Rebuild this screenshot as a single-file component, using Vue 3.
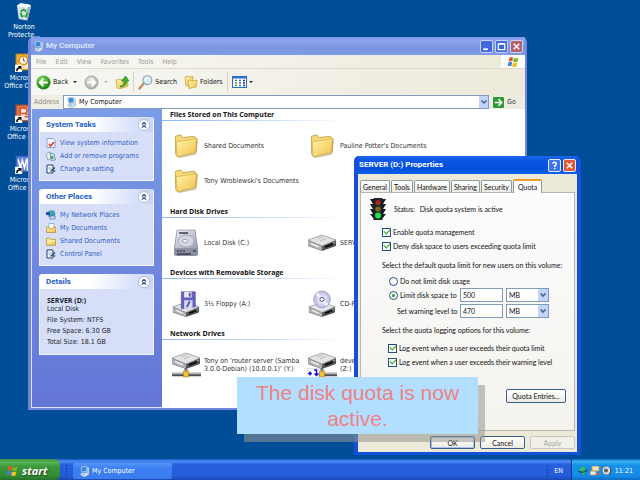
<script setup>
import { ref } from 'vue'

const desktopIcons = [
  { icon: 'bin', lines: ['Norton', 'Protecte...'] },
  { icon: 'outlook', lines: ['Microsoft', 'Office Outl...'] },
  { icon: 'powerpoint', lines: ['Microsoft', 'Office Po...'] },
  { icon: 'word', lines: ['Microsoft', 'Office W...'] },
]

const menus = ['File', 'Edit', 'View', 'Favorites', 'Tools', 'Help']

const panels = [
  {
    title: 'System Tasks',
    links: [
      { icon: 'info', text: 'View system information' },
      { icon: 'programs', text: 'Add or remove programs' },
      { icon: 'setting', text: 'Change a setting' },
    ],
  },
  {
    title: 'Other Places',
    links: [
      { icon: 'network', text: 'My Network Places' },
      { icon: 'docs', text: 'My Documents' },
      { icon: 'shared', text: 'Shared Documents' },
      { icon: 'setting', text: 'Control Panel' },
    ],
  },
]

const sections = [
  {
    title: 'Files Stored on This Computer',
    items: [
      { icon: 'folder', lines: ['Shared Documents'] },
      { icon: 'folder', lines: ["Pauline Potter's Documents"] },
      { icon: 'folder', lines: ["Tony Wroblewski's Documents"] },
    ],
  },
  {
    title: 'Hard Disk Drives',
    items: [
      { icon: 'hdd', lines: ['Local Disk (C:)'] },
      { icon: 'drive', lines: ['SERVER (D:)'] },
    ],
  },
  {
    title: 'Devices with Removable Storage',
    items: [
      { icon: 'floppy', lines: ['3½ Floppy (A:)'] },
      { icon: 'cd', lines: ['CD-ROM (E:)'] },
    ],
  },
  {
    title: 'Network Drives',
    items: [
      { icon: 'netdrive', lines: ["Tony on 'router server (Samba", "3.0.0-Debian) (10.0.0.1)' (Y:)"] },
      { icon: 'netsync', lines: ['devel', '(Z:)'] },
    ],
  },
]

const tabs = ['General', 'Tools', 'Hardware', 'Sharing', 'Security', 'Quota']
const address = ref('My Computer')
const enabled = ref(true)
const deny = ref(true)
const limitMode = ref('limit')
const limit = ref('500')
const warning = ref('470')
const logLimit = ref(true)
const logWarning = ref(true)
</script>

<template>
  <svg class="defs" aria-hidden="true">
    <defs>
      <linearGradient id="gFolder" x1="0" y1="0" x2="1" y2="1">
        <stop offset="0" stop-color="#fff3a8" /><stop offset="1" stop-color="#f0c24c" />
      </linearGradient>
      <linearGradient id="gMetal" x1="0" y1="0" x2="1" y2="1">
        <stop offset="0" stop-color="#eef0f6" /><stop offset="1" stop-color="#9a9eb0" />
      </linearGradient>
      <radialGradient id="gGreen" cx=".4" cy=".3" r=".8">
        <stop offset="0" stop-color="#8ee06c" /><stop offset=".6" stop-color="#2f9c24" /><stop offset="1" stop-color="#1c7416" />
      </radialGradient>
      <radialGradient id="gGrey" cx=".4" cy=".3" r=".8">
        <stop offset="0" stop-color="#e4e4e0" /><stop offset="1" stop-color="#a4a49e" />
      </radialGradient>
      <radialGradient id="gDisc">
        <stop offset="0" stop-color="#fff" /><stop offset=".5" stop-color="#dcdcf6" /><stop offset="1" stop-color="#b4b6dc" />
      </radialGradient>
    </defs>
    <symbol id="bin" viewBox="0 0 20 20">
      <path d="M2 4l2 14 9 1.500L17 4l-3-2H5z" fill="#d7e3ec" />
      <path d="M2 4l4-3 6 1 5 2-4 2-6-1z" fill="#f8fbfd" />
      <path d="M13 6l4-2-3.500 14.500L12 19z" fill="#9eb4c6" />
      <path d="M6 10l3-2 3 2M6 11l1 4h2M13 11l-1 4h-2" fill="none" stroke="#2aa63a" stroke-width="2" />
    </symbol>
    <symbol id="shortcut" viewBox="0 0 7 7">
      <path d="M0 0h7v7H0z" fill="#fff" /><path d="M1.200 6.200c-.4-2 .6-3.400 2.400-3.600L2.500 1.200h3.700v3.700L4.900 3.800C3.500 4 2.400 4.700 2.600 6.200z" fill="#111" />
    </symbol>
    <symbol id="outlook" viewBox="0 0 18 18">
      <rect x="1" y="1" width="16" height="15" fill="#f0b23e" stroke="#c98416" /><rect x="4" y="4" width="12" height="11" fill="#fbe7b0" />
      <circle cx="8" cy="7" r="4" fill="#fff" stroke="#d9901c" stroke-width="1.500" /><path d="M8 4.500V7l2 1" stroke="#a66209" fill="none" />
      <use href="#shortcut" x="0" y="11" width="7" height="7" />
    </symbol>
    <symbol id="powerpoint" viewBox="0 0 18 18">
      <rect x="1" y="1" width="16" height="15" fill="#e0704a" stroke="#b04a28" /><rect x="5" y="4" width="11" height="11" fill="#fbe4da" />
      <path d="M5 12V4h4a2.500 2.500 0 0 1 0 5H6M9 12h6M10 10h5" stroke="#d2552c" stroke-width="1.500" fill="none" />
      <use href="#shortcut" x="0" y="11" width="7" height="7" />
    </symbol>
    <symbol id="word" viewBox="0 0 18 18">
      <rect x="1" y="1" width="16" height="15" fill="#5c84d8" stroke="#2d54a8" /><rect x="11" y="3" width="6" height="12" fill="#e8effc" />
      <path d="M3 4l2 8 2-7 2 7 2-8M12 6h4M12 9h4M12 12h4" stroke="#fff" stroke-width="1.500" fill="none" />
      <use href="#shortcut" x="0" y="11" width="7" height="7" />
    </symbol>
    <symbol id="computer" viewBox="0 0 12 12">
      <path d="M2 1l6-1 1 6-6 1z" fill="#e4ecf6" stroke="#8ea6c4" stroke-width=".6" /><path d="M2.700 1.600l4.800-.8.700 4.700-4.800.8z" fill="#2e8ce4" />
      <path d="M9 1l2 .5V9l-2 1z" fill="#c2cedd" /><path d="M2 8l6-1 3 2-5 3-4-2z" fill="#dfe6ef" stroke="#8a9cb4" stroke-width=".5" /><path d="M4 9.500l3-1" stroke="#58a4dc" />
    </symbol>
    <symbol id="back" viewBox="0 0 16 16">
      <circle cx="8" cy="8" r="7.500" fill="url(#gGreen)" /><path d="M12.500 8H4.500M8 4L4 8l4 4" fill="none" stroke="#fff" stroke-width="2" />
    </symbol>
    <symbol id="forward" viewBox="0 0 16 16">
      <circle cx="8" cy="8" r="7" fill="url(#gGrey)" stroke="#a8a8a2" /><path d="M3.500 8h8M8 4l4 4-4 4" fill="none" stroke="#fff" stroke-width="2" />
    </symbol>
    <symbol id="up" viewBox="0 0 14 14">
      <path d="M1 5l4-1 1 1 6-1 1 7-9 3-2-1z" fill="url(#gFolder)" stroke="#c99b2c" stroke-width=".7" />
      <path d="M5 11c3 0 4-2 4-5H6.500L10.500 1 14 6h-2.300c0 4-2.700 6-6.700 6z" fill="#3cb52c" stroke="#1b7a18" stroke-width=".6" />
    </symbol>
    <symbol id="search" viewBox="0 0 16 16">
      <path d="M1.500 14.500l4.500-5.500" stroke="#c08a5a" stroke-width="2.500" stroke-linecap="round" />
      <circle cx="10" cy="5.500" r="4.700" fill="#d8f0fb" stroke="#8fa9c4" stroke-width="1.300" /><path d="M7.500 5a3 3 0 0 1 3-2" stroke="#fff" fill="none" stroke-width="1.500" />
    </symbol>
    <symbol id="folders" viewBox="0 0 14 14">
      <path d="M1 2l3-1 1 1 4-.5V9L2 11z" fill="url(#gFolder)" stroke="#c99b2c" stroke-width=".7" />
      <path d="M4 6l3-1 1 1 5-1-1 7-7 1.500z" fill="url(#gFolder)" stroke="#c99b2c" stroke-width=".7" />
    </symbol>
    <symbol id="views" viewBox="0 0 15 12">
      <rect x=".5" y=".5" width="14" height="11" fill="#fff" stroke="#2d6acb" /><path d="M0 0h15v2.500H0z" fill="#2d6acb" />
      <path d="M3 4.500h2M3 7h2M3 9.500h2" stroke="#3a9c48" stroke-width="1.500" /><path d="M7 4.500h2M7 7h2M7 9.500h2" stroke="#3465c4" stroke-width="1.500" /><path d="M11 4.500h2M11 7h2M11 9.500h2" stroke="#16337c" stroke-width="1.500" />
    </symbol>
    <symbol id="go" viewBox="0 0 12 12">
      <rect width="12" height="12" rx="1" fill="#2f9a36" /><path d="M2 6h7M6 2.500L9.500 6 6 9.500" fill="none" stroke="#fff" stroke-width="1.700" />
    </symbol>
    <symbol id="flag" viewBox="0 0 14 13">
      <path d="M2.500 2Q4.500.5 6.500 1.700L5.700 6Q3.700 5 1.700 6.200z" fill="#e8592a" /><path d="M7.300 2q2.200 1.200 5 0l-.9 4.300q-2.400 1-4.800 0z" fill="#7cb928" />
      <path d="M1.500 7q2-1.200 4-.2L4.700 11q-2-1-4 .2z" fill="#3d7fe0" /><path d="M6.400 7.200q2.400 1 4.800 0l-.9 4.300q-2.400 1-4.700-.1z" fill="#f7bd1c" />
    </symbol>
    <symbol id="info" viewBox="0 0 10 10">
      <path d="M1 .5h6l2 2v7H1z" fill="#f6f8fc" stroke="#7c90b8" stroke-width=".8" /><path d="M3 6l1.500 2L8 4" stroke="#dc3c2c" stroke-width="1.500" fill="none" />
    </symbol>
    <symbol id="programs" viewBox="0 0 10 10">
      <path d="M0 3l3-2 2 1v5l-3 2z" fill="#eef4f0" stroke="#6c90a0" stroke-width=".7" /><path d="M4 2l4 1 1.500 6-4.500.5z" fill="#c4dcf0" stroke="#6484a8" stroke-width=".7" /><circle cx="6" cy="6.500" r="1.600" fill="#5c9c6c" />
    </symbol>
    <symbol id="setting" viewBox="0 0 10 10">
      <path d="M1 1h6v8H1z" fill="#fdfdf4" stroke="#23406e" /><path d="M2.500 3h3v3h-3z" fill="#b6d2ee" /><path d="M4.500 7.500L9 3.500M7 7h2.500" stroke="#23406e" stroke-width="1.200" />
    </symbol>
    <symbol id="network" viewBox="0 0 10 10">
      <circle cx="5.500" cy="4" r="3.800" fill="#3c94dc" /><path d="M3 2l3-1 1 2-3 3z" fill="#58b45c" /><path d="M0 2h4v3H0z" fill="#1e50b0" /><path d="M4 6h5v3H4z" fill="#d4e4f4" stroke="#4a6890" stroke-width=".7" />
    </symbol>
    <symbol id="docs" viewBox="0 0 10 10">
      <path d="M3 .5h5v6H3z" fill="#fff" stroke="#7aa0d0" stroke-width=".7" /><path d="M.500 4h2l1 1.500h3L7.500 4h2v5.500h-9z" fill="url(#gFolder)" stroke="#b48a28" stroke-width=".7" />
    </symbol>
    <symbol id="shared" viewBox="0 0 10 10">
      <path d="M.500 2h3l1 1.300h5v6h-9z" fill="url(#gFolder)" stroke="#b48a28" stroke-width=".7" /><path d="M1 5h8" stroke="#fff6c0" />
    </symbol>
    <symbol id="folder" viewBox="-3 -2 32 30">
      <path d="M3 5l22 0 1 2-2 15L5 26z" fill="#8e8148" opacity=".45" />
      <path d="M1.500 3Q4 1 7.500 1.300L10 4l12-1.500L24 5v14L3.500 24 2 22z" fill="#f4d878" stroke="#b8923a" stroke-width=".8" />
      <path d="M2.500 8.500L24.500 5 22.500 20 3.500 24.500z" fill="url(#gFolder)" stroke="#d0a942" stroke-width=".7" />
    </symbol>
    <symbol id="hdd" viewBox="0 0 26 28">
      <path d="M4 1h18l3 19v6l-2 1H3l-2-1v-6z" fill="#8d90a0" /><path d="M4 1h18l2.500 18.500h-23z" fill="url(#gMetal)" stroke="#888ca0" stroke-width=".6" />
      <ellipse cx="13" cy="12" rx="8" ry="6" fill="#d4d8e6" stroke="#a6aabc" /><ellipse cx="12" cy="12" rx="2.500" ry="1.700" fill="#fff" stroke="#9a9eb0" /><path d="M6 4h9M4 22h2M7 22h2M10 22h2M4 25h14M20 22h3" stroke="#3d404c" stroke-width="1.400" />
    </symbol>
    <symbol id="drive" viewBox="0 0 30 18">
      <path d="M1 6l14-5 14 5v6l-14 5L1 12z" fill="#55565c" /><path d="M1 6l14-5 14 5-14 6z" fill="#e4e4e6" stroke="#999" stroke-width=".6" />
      <path d="M1 6.500l14 6V17L1 11.500z" fill="#b0b0b4" /><path d="M4 9.500l8 3.500" stroke="#eee" stroke-width="1.400" /><path d="M10 5l6-2M13 7l6-2.500" stroke="#bcbcc0" /><path d="M18 13l8-3" stroke="#111" stroke-width="2" /><circle cx="27" cy="8.500" r=".8" fill="#7fd05c" />
    </symbol>
    <symbol id="floppy" viewBox="0 0 30 30">
      <use href="#drive" x="0" y="12" width="30" height="18" /><path d="M10 2h15v16l-15 2z" fill="#6462bc" stroke="#45449a" stroke-width=".6" />
      <path d="M13 2h8v6h-8z" fill="#e9eaf8" /><path d="M18 3h2v4h-2z" fill="#55549c" /><path d="M13 11h9v8l-9 1z" fill="#d6d7f2" /><path d="M19 12l-3 6" stroke="#5654a8" stroke-width="2" />
    </symbol>
    <symbol id="cd" viewBox="0 0 30 30">
      <use href="#drive" x="0" y="12" width="30" height="18" /><circle cx="15" cy="10" r="9" fill="url(#gDisc)" stroke="#9597bd" stroke-width=".7" />
      <path d="M15 10L8 5l3-2.500zM15 10l7 5-3 2.500z" fill="#fff" opacity=".8" /><circle cx="15" cy="10" r="2.200" fill="#fff" stroke="#4c4e7c" />
    </symbol>
    <symbol id="netdrive" viewBox="0 0 30 26">
      <use href="#drive" x="0" y="0" width="30" height="18" /><path d="M15 16v6" stroke="#77787c" stroke-width="3" /><path d="M1 22.500h29" stroke="#4c4d52" stroke-width="3.500" /><path d="M1 21.700h29" stroke="#c2c3c8" stroke-width="1.200" />
      <path d="M12.500 19h5v6h-5z" fill="#f1c232" stroke="#a57c10" stroke-width=".6" />
    </symbol>
    <symbol id="netsync" viewBox="0 0 30 26">
      <use href="#netdrive" width="30" height="26" /><path d="M0 16.500h12V26H0z" fill="#fff" stroke="#b8bce8" stroke-width=".5" /><path d="M1 21.500h4M3 19.500v4M7 18h2.500v5M7.500 21.500l2 2 2-2" stroke="#1212d0" stroke-width="1.500" fill="none" />
    </symbol>
    <symbol id="light" viewBox="0 0 18 22">
      <path d="M1 1h16l-3 5h3l-3 5h3l-3 5h3l-4 5H5l-4-5h3L1 11h3L1 6h3z" fill="#15181c" /><path d="M4.500 0h9v22h-9z" fill="#1e262a" />
      <circle cx="9" cy="4.500" r="2.600" fill="#a8281c" /><circle cx="9" cy="11" r="2.600" fill="#7e6a1c" /><circle cx="9" cy="17.500" r="3" fill="#24e04c" />
    </symbol>
    <symbol id="chevrons" viewBox="0 0 12 12">
      <circle cx="6" cy="6" r="5.500" fill="#fff" stroke="#a9b8de" stroke-width=".9" /><path d="M4 5.500l2-2 2 2M4 8.500l2-2 2 2" fill="none" stroke="#1f3f8f" stroke-width="1.200" />
    </symbol>
    <symbol id="globe" viewBox="0 0 10 10">
      <circle cx="5" cy="5" r="4.500" fill="#1c7ecb" /><path d="M1 4c2-4 5-4 7-2L6 4l2 2-3 3-2-4z" fill="#37c05c" /><path d="M.500 5.500c3 1 6 1 9-1" stroke="#153a5c" fill="none" />
    </symbol>
    <symbol id="nettray" viewBox="0 0 10 10">
      <path d="M2 0h7v5H2z" fill="#f4e2b0" stroke="#c89030" stroke-width=".8" /><path d="M0 5h6v4H0z" fill="#e9eef4" stroke="#b08a4c" stroke-width=".8" /><path d="M6 8h4" stroke="#e05c3c" stroke-width="1.500" />
    </symbol>
    <symbol id="speaker" viewBox="0 0 10 10">
      <circle cx="4.500" cy="4.500" r="4.200" fill="#dcdee2" stroke="#70747c" stroke-width=".7" /><circle cx="4" cy="4.500" r="2" fill="#5c6068" /><path d="M7 7.500l2 1.500M8 2c1 2 1 4 0 5" stroke="#3c4048" fill="none" />
    </symbol>
  </svg>

  <div class="screen">
    <main class="desktop">
      <nav class="shortcuts" aria-label="Desktop">
        <button v-for="d in desktopIcons" :key="d.icon" class="shortcut" type="button">
          <svg><use :href="'#' + d.icon" /></svg>
          <span v-for="l in d.lines" :key="l">{{ l }}</span>
        </button>
      </nav>

      <section class="explorer">
        <header class="titlebar">
          <svg class="i11"><use href="#computer" /></svg>
          <h1>My Computer</h1>
          <button class="cap" type="button" aria-label="Minimize"><svg viewBox="0 0 12 12"><path d="M2.500 9h5" stroke="#fff" stroke-width="2" /></svg></button>
          <button class="cap" type="button" aria-label="Maximize"><svg viewBox="0 0 12 12"><path d="M2.500 3.500h7v6h-7zM2.500 3h7" fill="none" stroke="#fff" stroke-width="1.400" /></svg></button>
          <button class="cap close" type="button" aria-label="Close"><svg viewBox="0 0 12 12"><path d="M3 3l6 6M9 3L3 9" stroke="#fff" stroke-width="1.600" /></svg></button>
        </header>
        <div class="menubar">
          <nav><button v-for="m in menus" :key="m" type="button">{{ m }}</button></nav>
          <span class="throbber"><svg><use href="#flag" /></svg></span>
        </div>
        <div class="toolbar">
          <button type="button"><svg class="i15"><use href="#back" /></svg>Back<i class="caret"></i></button>
          <button type="button" aria-label="Forward"><svg class="i15"><use href="#forward" /></svg><i class="caret dim"></i></button>
          <button type="button" aria-label="Up"><svg class="i14"><use href="#up" /></svg></button>
          <span class="sep"></span>
          <button type="button"><svg class="i15"><use href="#search" /></svg>Search</button>
          <button type="button"><svg class="i14"><use href="#folders" /></svg>Folders</button>
          <span class="sep"></span>
          <button type="button" aria-label="Views"><svg class="views"><use href="#views" /></svg><i class="caret near"></i></button>
        </div>
        <div class="address">
          <label for="addr">Address</label>
          <div class="combo">
            <svg class="i11"><use href="#computer" /></svg>
            <input id="addr" v-model="address" type="text" />
            <button class="drop" type="button" aria-label="Show addresses"><svg viewBox="0 0 8 8"><path d="M1.500 2.500L4 5l2.500-2.500" fill="none" stroke="#4d6185" stroke-width="1.500" /></svg></button>
          </div>
          <button class="go" type="button"><svg class="i11"><use href="#go" /></svg>Go</button>
        </div>
        <div class="content">
          <aside>
            <section v-for="p in panels" :key="p.title" class="panel">
              <header><h2>{{ p.title }}</h2><button type="button" :aria-label="'Collapse ' + p.title"><svg><use href="#chevrons" /></svg></button></header>
              <ul>
                <li v-for="l in p.links" :key="l.text"><a href="#"><svg><use :href="'#' + l.icon" /></svg>{{ l.text }}</a></li>
              </ul>
            </section>
            <section class="panel">
              <header><h2>Details</h2><button type="button" aria-label="Collapse Details"><svg><use href="#chevrons" /></svg></button></header>
              <div class="details">
                <p><b>SERVER (D:)</b><br />Local Disk</p>
                <p>File System: NTFS</p>
                <p>Free Space: 6.30 GB</p>
                <p>Total Size: 18.1 GB</p>
              </div>
            </section>
          </aside>
          <div class="files">
            <section v-for="s in sections" :key="s.title">
              <h2>{{ s.title }}</h2>
              <ul>
                <li v-for="i in s.items" :key="i.lines[0]">
                  <svg><use :href="'#' + i.icon" /></svg>
                  <span><template v-for="(l, n) in i.lines" :key="l"><br v-if="n" />{{ l }}</template></span>
                </li>
              </ul>
            </section>
          </div>
        </div>
      </section>

      <form class="dialog" @submit.prevent>
        <header class="titlebar">
          <h1>SERVER (D:) Properties</h1>
          <button class="cap" type="button" aria-label="Help"><svg viewBox="0 0 12 12"><path d="M4 4.200Q4 2.500 6 2.500T8 4.300Q8 5.500 6.200 6.200V7.500M6.200 8.500V10" fill="none" stroke="#fff" stroke-width="1.500" /></svg></button>
          <button class="cap close" type="button" aria-label="Close"><svg viewBox="0 0 12 12"><path d="M3 3l6 6M9 3L3 9" stroke="#fff" stroke-width="1.600" /></svg></button>
        </header>
        <div class="sheet">
          <div class="tabs" role="tablist">
            <button v-for="t in tabs" :key="t" type="button" role="tab" :aria-selected="t === 'Quota'" :class="{ on: t === 'Quota' }">{{ t }}</button>
          </div>
          <div class="page" role="tabpanel">
            <div class="status"><svg><use href="#light" /></svg><span>Status:</span><span>Disk quota system is active</span></div>
            <div class="options">
              <label><input v-model="enabled" type="checkbox" />Enable quota management</label>
              <label><input v-model="deny" type="checkbox" />Deny disk space to users exceeding quota limit</label>
              <p>Select the default quota limit for new users on this volume:</p>
              <div class="limits">
                <label class="wide"><input v-model="limitMode" type="radio" name="mode" value="none" />Do not limit disk usage</label>
                <label><input v-model="limitMode" type="radio" name="mode" value="limit" />Limit disk space to</label>
                <input v-model="limit" type="text" aria-label="Disk space limit" />
                <span class="unit"><select aria-label="Limit unit"><option>MB</option></select><svg viewBox="0 0 10 12"><rect width="10" height="12" fill="#c3d3fb" /><path d="M2.500 4.500L5 7 7.500 4.500" fill="none" stroke="#4d6185" stroke-width="1.600" /></svg></span>
                <label class="warn" for="warn">Set warning level to</label>
                <input id="warn" v-model="warning" type="text" />
                <span class="unit"><select aria-label="Warning unit"><option>MB</option></select><svg viewBox="0 0 10 12"><rect width="10" height="12" fill="#c3d3fb" /><path d="M2.500 4.500L5 7 7.500 4.500" fill="none" stroke="#4d6185" stroke-width="1.600" /></svg></span>
              </div>
              <p>Select the quota logging options for this volume:</p>
              <div class="logging">
                <label><input v-model="logLimit" type="checkbox" />Log event when a user exceeds their quota limit</label>
                <label><input v-model="logWarning" type="checkbox" />Log event when a user exceeds their warning level</label>
              </div>
            </div>
            <button class="push entries" type="button">Quota Entries...</button>
          </div>
          <footer>
            <button class="push default" type="submit">OK</button>
            <button class="push" type="button">Cancel</button>
            <button class="push" type="button" disabled>Apply</button>
          </footer>
        </div>
      </form>

      <div class="callout" role="note">The disk quota is now active.</div>
    </main>

    <footer class="taskbar">
      <button class="start" type="button"><svg><use href="#flag" /></svg>start</button>
      <span class="grip"></span>
      <button class="task" type="button"><svg class="i11"><use href="#computer" /></svg>My Computer</button>
      <span class="lang"><i class="grip"></i>EN</span>
      <div class="tray">
        <svg><use href="#globe" /></svg><svg><use href="#nettray" /></svg><svg><use href="#speaker" /></svg>
        <time>11:21</time>
      </div>
    </footer>
  </div>
</template>

<style>
html, body, #app { height: 100%; }
body { margin: 0; overflow: hidden; }
</style>

<style scoped>
* { box-sizing: border-box; }
.defs { position: absolute; width: 0; height: 0; }
.screen { display: flex; flex-direction: column; height: 100vh; font: 7px/8px "DejaVu Sans Condensed", "DejaVu Sans", sans-serif; color: #111; }
button, input, select { font: inherit; color: inherit; margin: 0; padding: 0; border: 0; background: none; border-radius: 0; }
button { display: flex; align-items: center; white-space: nowrap; }
svg { display: block; flex: none; }
h1, h2, p, ul { margin: 0; padding: 0; font-size: inherit; list-style: none; }
.i11 { width: 11px; height: 11px; }
.i14 { width: 14px; height: 14px; }
.i15 { width: 15px; height: 15px; }

.desktop { position: relative; flex: 1; min-height: 0; background: #004e98; overflow: hidden; }
.shortcuts { display: flex; flex-direction: column; gap: 15px; width: 48px; padding-top: 2px; }
.shortcut { flex-direction: column; height: 36px; color: #fff; }
.shortcut svg { width: 19px; height: 19px; margin-bottom: 2px; }

.explorer { position: absolute; left: 28px; right: 113px; top: 37px; bottom: 49px; display: flex; flex-direction: column; border: solid #7186da; border-width: 0 2px 2px 3px; border-radius: 5px 5px 0 0; background: #7186da; }
.titlebar { display: flex; align-items: center; gap: 2px; height: 18px; padding: 0 2px; color: #fff; }
.titlebar h1 { flex: 1; font: bold 8px/10px Roboto, "Open Sans", sans-serif; }
.explorer .titlebar { background: linear-gradient(#7d97e6, #8aa4ec 20%, #7b93e0 60%, #7f9ce6); color: #dce4fa; }
.cap { width: 13px; height: 13px; border: 1px solid #c6d3f8; border-radius: 2px; background: #4169dc; }
.cap svg { width: 100%; height: 100%; }
.explorer .close { background: #b8606c; }

.menubar { display: flex; height: 14px; background: linear-gradient(90deg, #f7f7f4, #edeadb); border-bottom: 1px solid #dddacb; color: #9c9b94; }
.menubar nav { display: flex; flex: 1; gap: 9px; padding-left: 5px; }
.throbber { display: flex; align-items: center; justify-content: center; width: 24px; background: #fff; }
.throbber svg { width: 13px; height: 12px; }
.toolbar { display: flex; align-items: center; gap: 7px; height: 26px; padding-left: 5px; background: linear-gradient(90deg, #f7f7f4, #edeadb); }
.toolbar button { gap: 2px; }
.views { width: 15px; height: 12px; }
.caret { border: 2px solid transparent; border-top-color: #222; border-bottom: 0; margin-left: 3px; }
.caret.near { margin-left: 0; }
.caret.dim { border-top-color: #b8b6aa; }
.sep { width: 1px; height: 20px; margin: 0 -3px; background: #d6d3c4; }
.address { display: flex; align-items: center; height: 14px; padding-left: 3px; background: #f0eee3; color: #8e8d86; }
.combo { display: flex; align-items: center; flex: 1; height: 14px; margin: 0 4px; padding-left: 2px; gap: 2px; background: #fff; border: 1px solid #7f9db9; color: #111; }
.combo input { flex: 1; min-width: 0; outline: 0; }
.drop { width: 9px; height: 12px; background: #c3d3fb; justify-content: center; }
.drop svg { width: 8px; height: 8px; }
.go { gap: 3px; width: 32px; color: #333; }

.content { display: flex; flex: 1; min-height: 0; }
aside { width: 131px; flex: none; display: flex; flex-direction: column; gap: 8px; padding: 8px 8px 0 7px; background: linear-gradient(#7b9ce6, #6475d6); border: solid #dfe6fa; border-width: 0 0 1px 1px; color: #31467e; }
.panel { background: #d6dff7; border: 1px solid #f2f5fd; border-top: 0; border-radius: 3px 3px 0 0; }
.panel header { display: flex; align-items: center; justify-content: space-between; height: 15px; padding: 0 3px 0 6px; background: linear-gradient(90deg, #fff 45%, #c8d4f7); border-radius: 3px 3px 0 0; color: #215dc6; }
.panel h2 { font: bold 8px/10px Roboto, "Open Sans", sans-serif; }
.panel header svg { width: 12px; height: 12px; }
.panel ul { padding: 4px 6px 5px; }
.panel a { display: flex; align-items: center; gap: 4px; height: 13px; color: #3160c6; text-decoration: none; white-space: nowrap; }
.panel a svg { width: 10px; height: 10px; }
.details { display: flex; flex-direction: column; gap: 3px; padding: 8px 7px; color: #1b1e2c; }
.details b { font-family: "Open Sans", sans-serif; }

.files { flex: 1; min-width: 0; background: #fff; overflow: hidden; color: #333; }
.files h2 { height: 12px; padding: 2px 0 1px 8px; font: bold 7px/8px "Open Sans", sans-serif; color: #111; border-bottom: 1px solid; border-image: linear-gradient(90deg, #8cb6f4, #d6e4fb 35%, #fff 50%) 1; }
.files ul { display: grid; grid-template-columns: 136px 136px; grid-auto-rows: 35px; padding: 7px 0 8px 9px; }
.files section + section ul { padding-bottom: 7px; }
.files li { display: flex; align-items: center; gap: 3px; white-space: nowrap; }
.files li svg { width: 30px; height: 28px; }

.dialog { position: absolute; left: 354px; top: 156px; width: 227px; display: flex; flex-direction: column; border: solid #1450d8; border-width: 0 4px 3px 4px; border-radius: 5px 5px 0 0; background: #1450d8; font-family: Lato, "Liberation Sans", sans-serif; }
.dialog .titlebar { background: linear-gradient(#1c66ee, #0a55e4 30%, #0450dc 70%, #0c60f0); padding: 0 1px; }
.dialog .titlebar .cap { background: #3c74ec; border-color: #e6ecfc; }
.dialog .titlebar .close { background: #e25a34; }
.sheet { display: flex; flex-direction: column; background: #ece9d8; padding: 4px 2px 0 2px; }
.tabs { display: flex; align-items: flex-end; gap: 1px; height: 14px; position: relative; z-index: 1; }
.tabs button { height: 12px; padding: 0 2px; border: 1px solid #919b9c; border-bottom: 0; border-radius: 2px 2px 0 0; background: linear-gradient(#fff, #ecebe6); }
.tabs .on { height: 14px; margin-bottom: -1px; padding: 0 4px 1px; border-top: 2px solid #f09a28; background: #fcfcfe; }
.page { display: flex; flex-direction: column; padding: 5px 8px 27px 8px; border: 1px solid #b6b8b0; background: linear-gradient(#fcfcfe, #f4f3ee); }
.status { display: flex; align-items: center; gap: 5px; height: 22px; }
.status svg { width: 18px; height: 22px; margin-right: 2px; }
.options { display: flex; flex-direction: column; padding: 5px 0 0 13px; }
label { display: flex; align-items: center; gap: 2px; height: 14px; white-space: nowrap; }
.options p { height: 8px; margin: 8px 0 7px; white-space: nowrap; }
input[type="checkbox"], input[type="radio"] { appearance: none; width: 9px; height: 9px; flex: none; border: 1px solid #1c5180; background: #fff; display: grid; place-items: center; }
input[type="checkbox"]:checked::after { content: ""; width: 5px; height: 3px; border: solid #21a121; border-width: 0 0 1px 1px; transform: translateY(-1px) rotate(-45deg); }
input[type="radio"] { border-radius: 50%; }
input[type="radio"]:checked::after { content: ""; width: 3px; height: 3px; border-radius: 50%; background: #21a121; }
.limits { display: grid; grid-template-columns: 68px 43px 43px; column-gap: 3px; row-gap: 2px; padding-left: 7px; align-items: center; }
.limits .wide { grid-column: 1 / -1; height: 10px; }
.limits .warn { padding-left: 8px; }
.limits input[type="text"], .unit { height: 14px; border: 1px solid #7f9db9; background: #fff; padding: 0 2px; min-width: 0; }
.unit { position: relative; padding: 0; }
.unit select { appearance: none; width: 100%; height: 100%; padding: 0 2px; }
.unit svg { position: absolute; right: 0; top: 0; width: 10px; height: 12px; pointer-events: none; }
.logging { padding-left: 6px; }
.push { justify-content: center; width: 45px; height: 13px; border: 1px solid #3c5f88; border-radius: 2px; background: linear-gradient(#fff, #eceae2); }
.push.default { box-shadow: inset 0 0 0 1px #a9c3f0; }
.push:disabled { color: #a9a89c; border-color: #c9c7ba; background: #f2f1e9; }
.entries { align-self: flex-end; width: 60px; height: 14px; margin-top: 20px; }
.sheet footer { display: flex; justify-content: flex-end; gap: 5px; padding: 5px 0 3px; }

.callout { position: absolute; left: 237px; top: 377px; width: 241px; padding: 3px 12px 2px; background: #b2dfff; color: #ee8282; box-shadow: 7px 8px 0 rgba(150, 150, 145, .55); font: 21px/26px "Liberation Sans", Arial, sans-serif; text-align: center; }

.taskbar { display: flex; align-items: stretch; height: 21px; background: linear-gradient(#1f56c8, #4a8cf4 12%, #2660dc 25%, #245cdb 80%, #1c48b4); color: #fff; }
.start { width: 60px; padding: 2px 0 0 6px; gap: 3px; border-radius: 0 5px 5px 0; background: linear-gradient(#3d8f3c, #57b054 15%, #3a963a 40%, #338c33 80%, #27702a); font: italic bold 11px/12px "Open Sans", "Liberation Sans", sans-serif; text-shadow: 1px 1px 1px #1c4a1c; }
.start svg { width: 13px; height: 12px; }
.grip { width: 3px; height: 13px; margin: 5px; background: radial-gradient(circle, #173f9c 40%, transparent 50%) 0 0 / 3px 3px; }
.task { width: 99px; margin: 4px 0 1px; padding-left: 6px; gap: 2px; border-radius: 2px; background: linear-gradient(#5a96fa, #3c80f2 30%, #3a7cee); }
.lang { display: flex; align-items: center; margin-left: auto; padding: 3px 8px 0 0; }
.lang .grip { margin: 0 5px; }
.tray { display: flex; align-items: center; gap: 2px; width: 69px; padding: 3px 7px 0 6px; border-left: 1px solid #0c3c8c; background: linear-gradient(#0f6cc8, #3cb2f6 12%, #1690ea 30%, #148ce8 80%, #0e6cc4); }
.tray svg { width: 10px; height: 10px; }
.tray time { margin-left: auto; }
</style>
